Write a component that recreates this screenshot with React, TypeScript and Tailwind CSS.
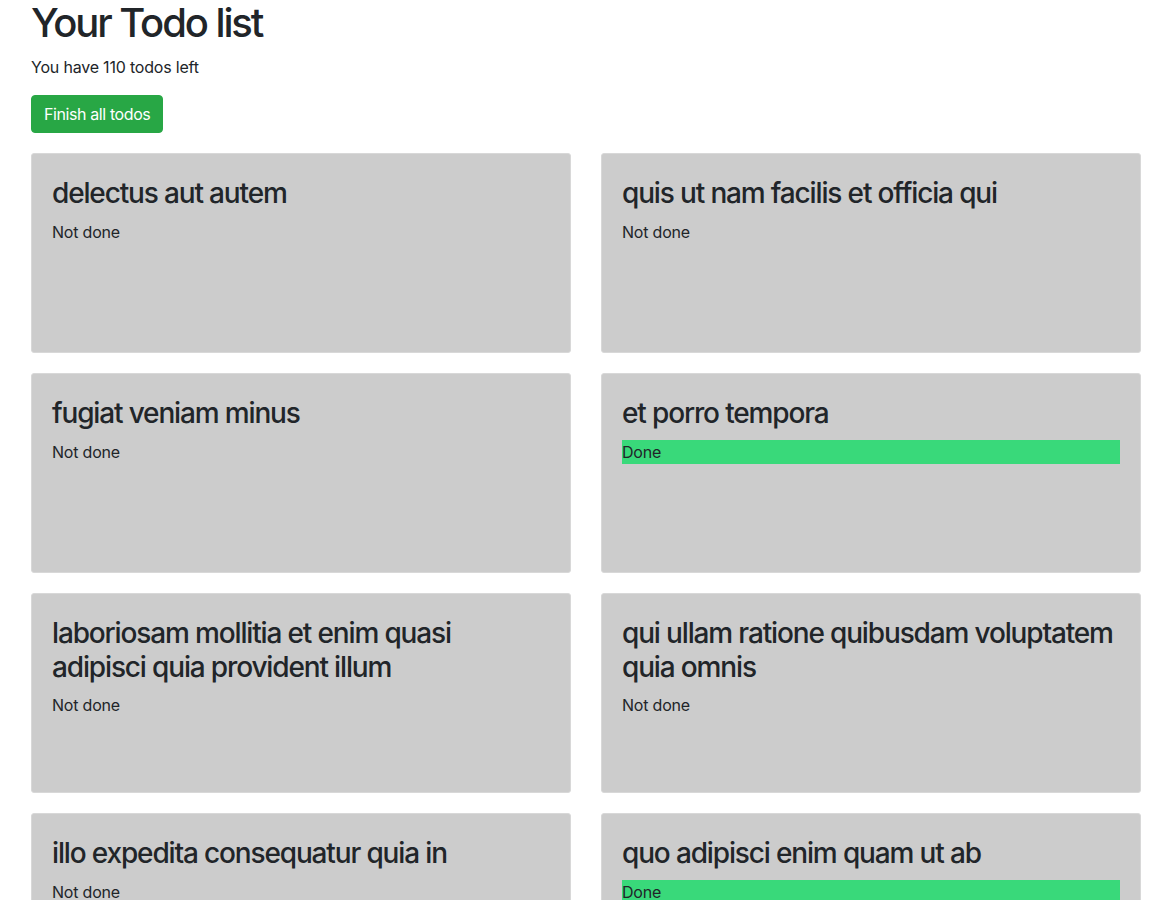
import React from "react";

const todos: { title: string; done: boolean }[] = [
  { title: "delectus aut autem", done: false },
  { title: "quis ut nam facilis et officia qui", done: false },
  { title: "fugiat veniam minus", done: false },
  { title: "et porro tempora", done: true },
  { title: "laboriosam mollitia et enim quasi adipisci quia provident illum", done: false },
  { title: "qui ullam ratione quibusdam voluptatem quia omnis", done: false },
  { title: "illo expedita consequatur quia in", done: false },
  { title: "quo adipisci enim quam ut ab", done: true },
];

export default function App() {
  return (
    <div
      className="bg-white text-[#212529] min-h-[900px] pl-[31px] w-[1141px]"
      style={{ fontFamily: "Inter, 'Noto Sans', sans-serif" }}
    >
      <h1 className="text-[40px] leading-[48px] font-medium mt-[-1px] mb-2 tracking-[-2.1px]">Your Todo list</h1>
      <p className="text-[16px] leading-6 mb-4 tracking-[-0.2px]">You have 110 todos left</p>
      <button className="bg-[#28a745] text-white text-[16px] leading-6 px-3 py-[6px] rounded-[4px] border border-[#28a745] tracking-[-0.4px]">
        Finish all todos
      </button>
      <div className="grid grid-cols-2 gap-x-[30px] gap-y-5 mt-5">
        {todos.map((t, i) => (
          <div key={i} className="h-[200px] bg-[#cccccc] border border-[#d8d8d8] rounded-[3px] p-5">
            <h3 className="text-[28px] leading-[33.6px] font-medium pt-[3px] mb-[9px] tracking-[-1.15px]">{t.title}</h3>
            {t.done ? (
              <p className="bg-[#39d97a] text-[16px] leading-6 tracking-[-0.2px]">Done</p>
            ) : (
              <p className="text-[16px] leading-6 tracking-[-0.2px]">Not done</p>
            )}
          </div>
        ))}
      </div>
    </div>
  );
}
